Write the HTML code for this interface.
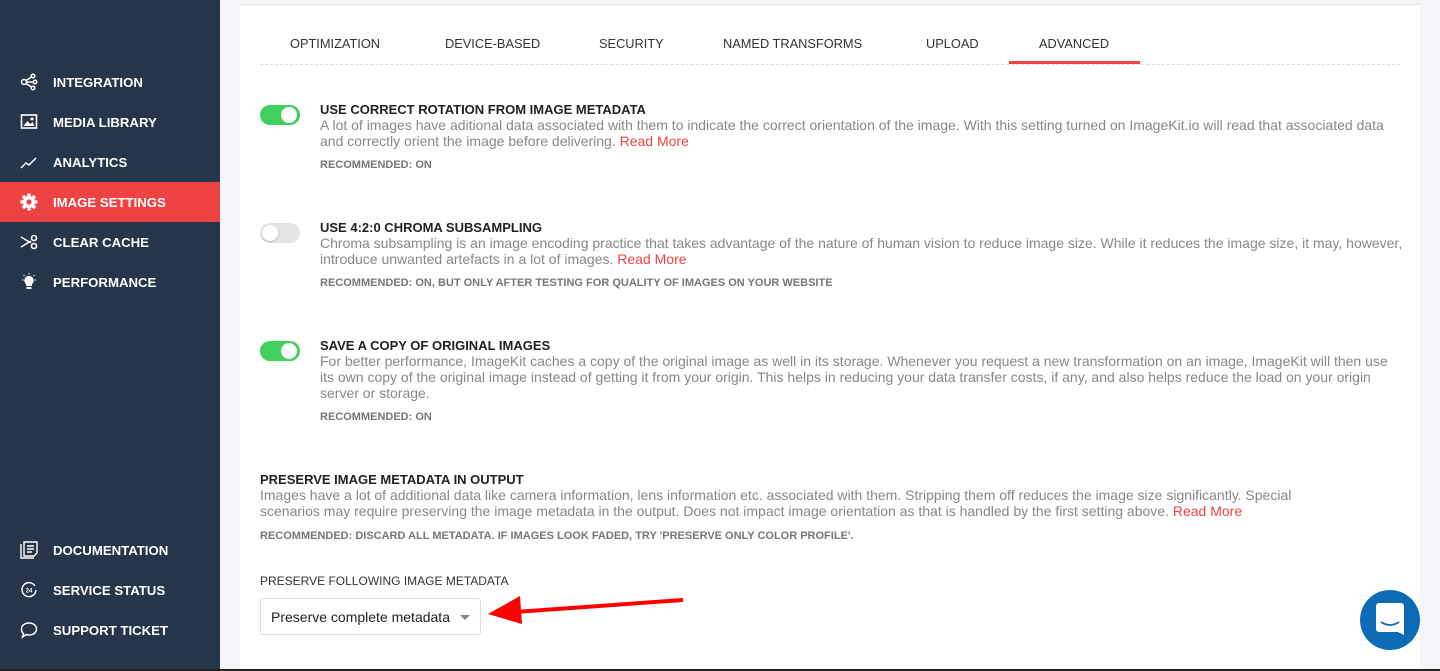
<!DOCTYPE html>
<html><head><meta charset="utf-8"><style>
*{margin:0;padding:0;box-sizing:border-box}
body{width:1440px;height:671px;overflow:hidden;background:#f4f6f9;font-family:"Liberation Sans",Arial,sans-serif;position:relative}
.side{position:absolute;left:0;top:0;width:220px;height:669px;background:#25354a}
.nav{position:absolute;left:0;width:220px;height:40px;color:#fff;font-weight:bold;font-size:13.2px;display:flex;align-items:center}
.nav svg{position:absolute;left:20px;top:11px}
.nav span{position:absolute;left:53px}
.nav.act{background:#ef4343}
.card{position:absolute;left:240px;top:4px;width:1180px;height:665px;background:#fff;border-top:1px solid #e2e2e2}
.tabs{position:absolute;left:20px;top:0;width:1140px;height:60px;border-bottom:1px dashed #ddd}
.tab{position:absolute;top:31px;font-size:12.8px;color:#333}
.tabline{position:absolute;left:749px;top:56px;width:131px;height:3px;background:#e44}
.tg{position:absolute;left:20px;width:40px;height:20px;border-radius:10px}
.tg.on{background:#3fd15c}.tg.off{background:#e4e4e4}
.tg i{position:absolute;top:2px;width:16px;height:16px;border-radius:50%;background:#fff}
.tg.on i{right:3px}.tg.off i{left:2px;box-shadow:0 1px 2px rgba(0,0,0,.2)}
.h{position:absolute;font-weight:bold;font-size:13px;color:#222}
.p{position:absolute;font-size:14px;color:#888;line-height:16px}
.p a{color:#ef4343;text-decoration:none}
.r{position:absolute;font-weight:bold;font-size:11px;color:#777}
.bot{position:absolute;left:0;top:669px;width:1440px;height:2px;background:#222}
</style></head><body>
<div class="side">
<div class="nav" style="top:62px"><svg width="18" height="18" viewBox="0 0 18 18" fill="none" stroke="#fff" stroke-width="1.5"><circle cx="4" cy="9" r="2.5"/><circle cx="13" cy="3" r="1.8"/><circle cx="15" cy="9" r="1.8"/><circle cx="13" cy="15" r="1.8"/><path d="M6.5 9h7M6 7.5l5.5-3.5M6 10.5l5.5 3.5"/></svg><span>INTEGRATION</span></div>
<div class="nav" style="top:102px"><svg width="18" height="18" viewBox="0 0 18 18"><rect x="1.5" y="2" width="15" height="13" fill="none" stroke="#fff" stroke-width="1.6"/><path d="M3.5 13l4-5 3 3 2-2 2 4z" fill="#fff"/><circle cx="12" cy="6" r="1.5" fill="#fff"/></svg><span>MEDIA LIBRARY</span></div>
<div class="nav" style="top:142px"><svg width="18" height="18" viewBox="0 0 18 18" fill="none" stroke="#fff" stroke-width="1.5"><path d="M1 15l5-5 3 2 7-7"/></svg><span>ANALYTICS</span></div>
<div class="nav act" style="top:182px"><svg width="18" height="18" viewBox="0 0 18 18"><g fill="#fff"><circle cx="9" cy="9" r="6"/><rect x="7.3" y="0.5" width="3.4" height="17"/><rect x="0.5" y="7.3" width="17" height="3.4"/><rect x="7.3" y="0.5" width="3.4" height="17" transform="rotate(45 9 9)"/><rect x="7.3" y="0.5" width="3.4" height="17" transform="rotate(-45 9 9)"/></g><circle cx="9" cy="9" r="2.6" fill="#ef4343"/></svg><span>IMAGE SETTINGS</span></div>
<div class="nav" style="top:222px"><svg width="18" height="18" viewBox="0 0 18 18" fill="none" stroke="#fff" stroke-width="1.6"><path d="M1 4l10 6M1 14l10-6"/><circle cx="14" cy="5" r="2.5"/><circle cx="14" cy="13" r="2.5"/></svg><span>CLEAR CACHE</span></div>
<div class="nav" style="top:262px"><svg width="18" height="18" viewBox="0 0 18 18"><path d="M9 3a4.5 4.5 0 0 0-3 8v2h6v-2a4.5 4.5 0 0 0-3-8z" fill="#fff"/><rect x="6.5" y="14" width="5" height="2" fill="#fff"/><path d="M9 0v1.5M2 7h1.5M14.5 7H16M3.5 2l1 1M14.5 2l-1 1" stroke="#fff"/></svg><span>PERFORMANCE</span></div>
<div class="nav" style="top:530px"><svg width="18" height="18" viewBox="0 0 18 18" fill="none" stroke="#fff" stroke-width="1.4"><path d="M1 3v14h13"/><path d="M4 1h13v11l-3 3H4z"/><path d="M7 5h7M7 8h7M7 11h5"/></svg><span>DOCUMENTATION</span></div>
<div class="nav" style="top:570px"><svg width="18" height="18" viewBox="0 0 18 18" fill="none" stroke="#fff" stroke-width="1.4"><path d="M15 5A7 7 0 1 0 16 9" /><text x="9" y="11.5" font-size="6" fill="#fff" stroke="none" text-anchor="middle" font-family="Liberation Sans" font-weight="bold">24</text></svg><span>SERVICE STATUS</span></div>
<div class="nav" style="top:610px"><svg width="18" height="18" viewBox="0 0 18 18" fill="none" stroke="#fff" stroke-width="1.5"><path d="M9 2c4.4 0 7.5 2.6 7.5 6s-3.1 6-7.5 6c-1 0-2-.1-2.8-.4L2.5 16l1-3.3C2.2 11.6 1.5 9.9 1.5 8 1.5 4.6 4.6 2 9 2z"/></svg><span>SUPPORT TICKET</span></div>
</div>
<div class="card">
<div class="tabs">
<div class="tab" style="left:30px">OPTIMIZATION</div>
<div class="tab" style="left:185px">DEVICE-BASED</div>
<div class="tab" style="left:339px">SECURITY</div>
<div class="tab" style="left:463px">NAMED TRANSFORMS</div>
<div class="tab" style="left:666px">UPLOAD</div>
<div class="tab" style="left:779px">ADVANCED</div>
<div class="tabline"></div>
</div>
<div class="tg on" style="top:100px"><i></i></div>
<div class="h" style="left:80px;top:97px">USE CORRECT ROTATION FROM IMAGE METADATA</div>
<div class="p" style="left:80px;top:112px;width:1085px">A lot of images have aditional data associated with them to indicate the correct orientation of the image. With this setting turned on ImageKit.io will read that associated data and correctly orient the image before delivering. <a>Read More</a></div>
<div class="r" style="left:80px;top:154px">RECOMMENDED: ON</div>

<div class="tg off" style="top:218px"><i></i></div>
<div class="h" style="left:80px;top:215px">USE 4:2:0 CHROMA SUBSAMPLING</div>
<div class="p" style="left:80px;top:230px;width:1085px">Chroma subsampling is an image encoding practice that takes advantage of the nature of human vision to reduce image size. While it reduces the image size, it may, however, introduce unwanted artefacts in a lot of images. <a>Read More</a></div>
<div class="r" style="left:80px;top:272px">RECOMMENDED: ON, BUT ONLY AFTER TESTING FOR QUALITY OF IMAGES ON YOUR WEBSITE</div>

<div class="tg on" style="top:336px"><i></i></div>
<div class="h" style="left:80px;top:333px">SAVE A COPY OF ORIGINAL IMAGES</div>
<div class="p" style="left:80px;top:348px;width:1085px">For better performance, ImageKit caches a copy of the original image as well in its storage. Whenever you request a new transformation on an image, ImageKit will then use its own copy of the original image instead of getting it from your origin. This helps in reducing your data transfer costs, if any, and also helps reduce the load on your origin server or storage.</div>
<div class="r" style="left:80px;top:406px">RECOMMENDED: ON</div>

<div class="h" style="left:20px;top:467px">PRESERVE IMAGE METADATA IN OUTPUT</div>
<div class="p" style="left:20px;top:482px;width:1050px">Images have a lot of additional data like camera information, lens information etc. associated with them. Stripping them off reduces the image size significantly. Special scenarios may require preserving the image metadata in the output. Does not impact image orientation as that is handled by the first setting above. <a>Read More</a></div>
<div class="r" style="left:20px;top:525px">RECOMMENDED: DISCARD ALL METADATA. IF IMAGES LOOK FADED, TRY 'PRESERVE ONLY COLOR PROFILE'.</div>
<div style="position:absolute;left:20px;top:569px;font-size:12px;color:#333">PRESERVE FOLLOWING IMAGE METADATA</div>
<div style="position:absolute;left:20px;top:593px;width:221px;height:37px;border:1px solid #ddd;border-radius:3px;font-size:14px;color:#222;padding:10px 0 0 10px">Preserve complete metadata<span style="position:absolute;right:10px;top:16px;border:5px solid transparent;border-top:5px solid #888"></span></div>
</div>
<svg style="position:absolute;left:480px;top:590px" width="210" height="40"><path d="M203 10L35 22" stroke="#f00" stroke-width="4"/><path d="M8 24L40 6L42 34z" fill="#f00"/></svg>
<div style="position:absolute;left:1360px;top:590px;width:60px;height:60px;border-radius:50%;background:#0b6cb5"></div>
<svg style="position:absolute;left:1376px;top:603px" width="30" height="34" viewBox="0 0 30 34"><path d="M3 0h22a3 3 0 0 1 3 3v29l-6-3H3a3 3 0 0 1-3-3V3a3 3 0 0 1 3-3z" fill="#fff"/><path d="M5 19q9 6 18 0" stroke="#0b6cb5" stroke-width="1.8" fill="none"/></svg>
<div class="bot"></div>
</body></html>
